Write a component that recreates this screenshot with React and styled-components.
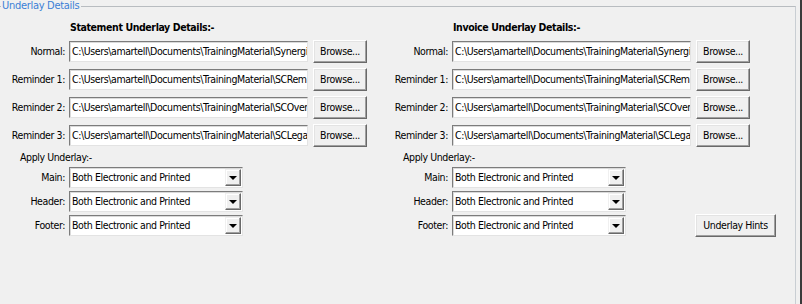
import React from 'react';
import styled, { createGlobalStyle } from 'styled-components';

const GlobalStyle = createGlobalStyle`
  html, body {
    margin: 0;
    padding: 0;
    background: #f0f0f0;
  }
  body {
    width: 802px;
    height: 304px;
    overflow: hidden;
    font-family: Tahoma, "DejaVu Sans Condensed", "Liberation Sans", sans-serif;
    font-size: 10.5px;
    letter-spacing: -0.4px;
    color: #000;
  }
`;

// --- Frame ---
const Window = styled.div`
  box-sizing: border-box;
  width: 802px;
  height: 304px;
  padding-right: 4px;
  border-right: 2px solid #3a3a3a;
  overflow: hidden;
`;

const GroupBox = styled.fieldset`
  box-sizing: border-box;
  margin: 0 0 0 -3px;
  padding: 0;
  height: 320px;
  border: 1px solid #c9ced3;
  border-top-color: #b8bcc0;
  min-width: 0;
`;

const GroupTitle = styled.legend`
  margin-left: 3px;
  padding: 0 2px 0 1px;
  color: #3b7fd6;
  font-size: 11px;
  letter-spacing: -0.3px;
  line-height: 12px;
`;

const Columns = styled.div`
  display: grid;
  grid-template-columns: 383px 383px;
  padding-top: 8px;
  padding-left: 2px;
`;

const Column = styled.div`
  display: flex;
  flex-direction: column;
`;

const SectionTitle = styled.div`
  margin-left: 70px;
  height: 17px;
  font-weight: bold;
  line-height: 14px;
`;

const SubTitle = styled.div`
  margin-left: 20px;
  height: 16px;
  line-height: 14px;
  padding-top: 1px;
  box-sizing: border-box;
`;

// --- Rows ---
const FileRow = styled.div`
  display: grid;
  grid-template-columns: 65px 239px 54px;
  column-gap: 4px;
  align-items: center;
  height: 28px;
  & > button { margin-left: 1px; }
`;

const SelectRow = styled.div`
  display: grid;
  grid-template-columns: 65px 239px auto;
  column-gap: 4px;
  align-items: center;
  height: 24px;
`;

const Label = styled.label`
  text-align: right;
  white-space: nowrap;
`;

const PathField = styled.div`
  box-sizing: border-box;
  height: 21px;
  padding: 0 2px;
  background: #fff;
  border: 1px solid;
  border-color: #7c7c7c #e3e3e3 #e3e3e3 #7c7c7c;
  box-shadow: inset 1px 1px 0 #dadada;
  line-height: 19px;
  white-space: nowrap;
  overflow: hidden;
`;

const Button = styled.button`
  box-sizing: border-box;
  width: ${p => p.$width || 54}px;
  height: 23px;
  padding: 0;
  background: #f0f0f0;
  border: 1px solid;
  border-color: #ffffff #696969 #696969 #ffffff;
  box-shadow: inset -1px -1px 0 #a0a0a0, inset 1px 1px 0 #e3e3e3;
  font: inherit;
  letter-spacing: inherit;
  color: #000;
  cursor: default;
`;

const Combo = styled.div`
  box-sizing: border-box;
  width: 174px;
  height: 21px;
  display: flex;
  align-items: stretch;
  background: #fff;
  border: 1px solid;
  border-color: #7c7c7c #e3e3e3 #e3e3e3 #7c7c7c;
  box-shadow: inset 1px 1px 0 #dadada;
`;

const ComboText = styled.div`
  flex: 1;
  padding-left: 2px;
  line-height: 19px;
  white-space: nowrap;
  overflow: hidden;
`;

const ComboArrow = styled.div`
  box-sizing: border-box;
  width: 16px;
  margin: 1px 1px 1px 0;
  background: #f0f0f0;
  border: 1px solid;
  border-color: #f0f0f0 #696969 #696969 #f0f0f0;
  box-shadow: inset -1px -1px 0 #a0a0a0, inset 1px 1px 0 #fff;
  display: flex;
  align-items: center;
  justify-content: center;
  &::after {
    content: '';
    width: 0;
    height: 0;
    margin-top: 1px;
    border-left: 4px solid transparent;
    border-right: 4px solid transparent;
    border-top: 4px solid #000;
  }
`;

const Dropdown = ({ value }) => (
  <Combo>
    <ComboText>{value}</ComboText>
    <ComboArrow />
  </Combo>
);

const base = 'C:\\Users\\amartell\\Documents\\TrainingMaterial\\';

const files = [
  { label: 'Normal:', value: base + 'Synergi' },
  { label: 'Reminder 1:', value: base + 'SCRemi' },
  { label: 'Reminder 2:', value: base + 'SCOver' },
  { label: 'Reminder 3:', value: base + 'SCLega' },
];

const parts = ['Main:', 'Header:', 'Footer:'];

const UnderlayColumn = ({ title, hints }) => (
  <Column>
    <SectionTitle>{title}</SectionTitle>
    {files.map(f => (
      <FileRow key={f.label}>
        <Label>{f.label}</Label>
        <PathField>{f.value}</PathField>
        <Button>Browse...</Button>
      </FileRow>
    ))}
    <SubTitle>Apply Underlay:-</SubTitle>
    {parts.map((p, i) => (
      <SelectRow key={p}>
        <Label>{p}</Label>
        <Dropdown value="Both Electronic and Printed" />
        {hints && i === parts.length - 1 && <Button $width={81}>Underlay Hints</Button>}
      </SelectRow>
    ))}
  </Column>
);

const App = () => (
  <>
    <GlobalStyle />
    <Window>
      <GroupBox>
        <GroupTitle>Underlay Details</GroupTitle>
        <Columns>
          <UnderlayColumn title="Statement Underlay Details:-" />
          <UnderlayColumn title="Invoice Underlay Details:-" hints />
        </Columns>
      </GroupBox>
    </Window>
  </>
);

export default App;
